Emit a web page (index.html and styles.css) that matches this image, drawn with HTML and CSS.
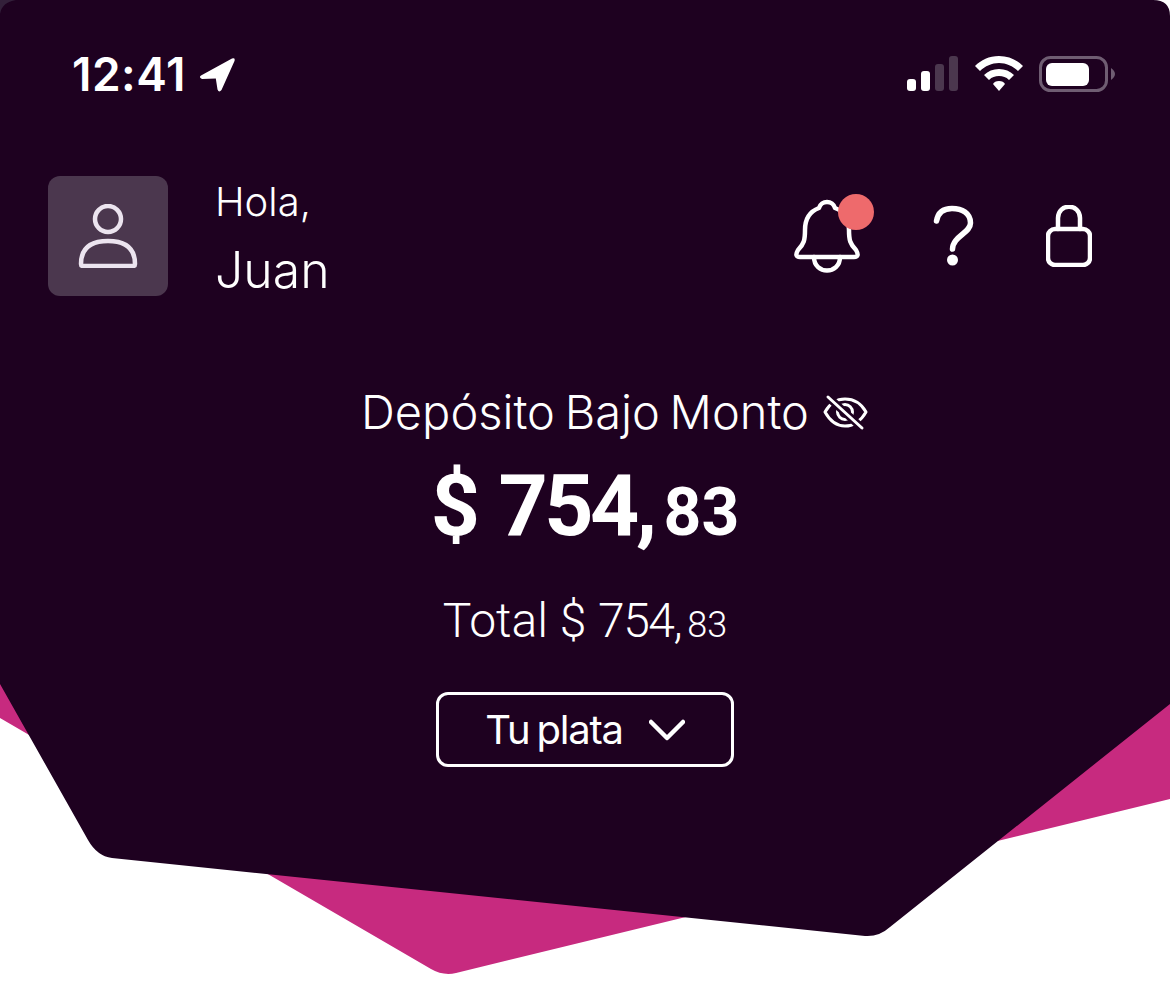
FILE: index.html
```html
<!DOCTYPE html>
<html lang="es">
<head>
    <meta charset="UTF-8">
    <meta name="viewport" content="width=device-width, initial-scale=1.0">
    <title>Tu plata</title>
    <link rel="stylesheet" href="styles.css">
</head>
<body>
    <div class="screen">
        <!-- fondo poligonal -->
        <svg class="backdrop" width="1170" height="982" viewBox="0 0 1170 982">
            <path class="shape-pink" d="M0 600V718L431 969Q443 976 456 973L1170 799V600Z"/>
            <path class="shape-dark" d="M0 0H1153Q1170 0 1170 16V704L890 927Q879 937 865 936L112 858Q97 856 88 840L0 684Z"/>
            <path class="shape-corner" d="M0 0H16Q2 2 0 14Z"/>
        </svg>

        <div class="content">
            <div class="status-bar">
                <div class="status-time">
                    <span>12:41</span>
                    <svg width="36" height="36" viewBox="0 0 36 36"><path class="fill-white" d="M2 19.5 33 2.500Q36.500 1.500 35.500 5L22.500 34Q20 37 18.500 33.500L16.800 22.500 3 23Q-.5 21.500 2 19.500Z"/></svg>
                </div>
                <div class="status-icons">
                    <svg width="52" height="36" viewBox="0 0 52 36">
                        <rect class="fill-white" x="0" y="23" width="9" height="12" rx="3"/>
                        <rect class="fill-white" x="14" y="15" width="9" height="20" rx="3"/>
                        <rect class="fill-dim" x="28" y="8" width="9" height="27" rx="3"/>
                        <rect class="fill-dim" x="42" y="0" width="9" height="35" rx="3"/>
                    </svg>
                    <svg width="50" height="36" viewBox="0 0 50 36">
                        <path class="fill-white" d="M25 0C15 0 7 4 1 10L6 15C11 10 18 7 25 7S39 10 44 15L49 10C43 4 35 0 25 0Z"/>
                        <path class="fill-white" d="M25 13C19 13 14 15 10 19L15 24C18 21 21 20 25 20S32 21 35 24L40 19C36 15 31 13 25 13Z"/>
                        <path class="fill-white" d="M25 25C22 25 20 26 19 28L25 35 31 28C30 26 28 25 25 25Z"/>
                    </svg>
                    <svg width="76" height="36" viewBox="0 0 76 36">
                        <rect class="battery-case" x="1.500" y="1.500" width="66" height="33" rx="10"/>
                        <rect class="fill-white" x="7" y="7" width="43" height="23" rx="6"/>
                        <path class="fill-dim-strong" d="M72 12Q76 15 76 18T72 24Z"/>
                    </svg>
                </div>
            </div>

            <header class="top-row">
                <div class="avatar">
                    <svg width="60" height="64" viewBox="0 0 60 64">
                        <circle class="line-soft" cx="30" cy="15" r="13"/>
                        <path class="line-soft" d="M3 60Q3 37 30 37T57 60Q57 62 55 62H5Q3 62 3 60Z"/>
                    </svg>
                </div>
                <div class="greeting">
                    <div class="greeting-hello">Hola,</div>
                    <div class="greeting-name">Juan</div>
                </div>
                <div class="actions">
                    <div class="bell">
                        <svg width="66" height="78" viewBox="0 0 66 78">
                            <path class="line" d="M4 52C10 46 11 42 11 32C11 20 17 13 25 10C27 2 39 2 41 10C49 13 55 20 55 32C55 42 56 46 62 52Q66 59 60 59H6Q0 59 4 52Z"/>
                            <path class="line" d="M20 59C20 77 46 77 46 59"/>
                        </svg>
                        <span class="badge"></span>
                    </div>
                    <svg width="42" height="62" viewBox="0 0 42 62">
                        <path class="line line-heavy" d="M4.500 16C6 7 12 3.500 20 3.500C30 3.500 38.500 8 38.500 18C38.500 28 21 31 20.500 44"/>
                        <circle class="fill-white" cx="20.500" cy="55" r="5.500"/>
                    </svg>
                    <svg width="46" height="62" viewBox="0 0 46 62">
                        <rect class="line" x="2" y="24" width="42" height="36" rx="7"/>
                        <path class="line" d="M12 24V13C12 -2 34 -2 34 13V24"/>
                    </svg>
                </div>
            </header>

            <section class="balance">
                <div class="balance-title">
                    <span>Depósito Bajo Monto</span>
                    <svg width="46" height="38" viewBox="0 0 46 38">
                        <path class="line-thin" d="M2 19C7 10 14 6 22 6S38 10 43 19C38 28 30 33 22 33S7 28 2 19Z"/>
                        <circle class="line-thin" cx="22" cy="19" r="7.500"/>
                        <path class="slash-gap" d="M5 4 39 35"/>
                        <path class="line-thin" d="M5 4 39 35"/>
                    </svg>
                </div>
                <div class="balance-amount">$ 754,<small>83</small></div>
                <div class="balance-total">Total $ <span class="digits">754,</span><small>83</small></div>
                <button class="money-btn">
                    <span>Tu plata</span>
                    <svg width="36" height="22" viewBox="0 0 36 22"><path class="line" d="M2 3 18 19 34 3"/></svg>
                </button>
            </section>
        </div>
    </div>
</body>
</html>
```

FILE: styles.css
```css
* {
    box-sizing: border-box;
}
body {
    margin: 0;
    background: white;
    font-family: "Inter", "Noto Sans", sans-serif;
    color: white;
}
.screen {
    position: relative;
    width: 1170px;
    height: 982px;
    overflow: hidden;
}
.backdrop {
    position: absolute;
    top: 0;
    left: 0;
}
.shape-pink {
    fill: #c72a7f;
}
.shape-dark {
    fill: #1e0120;
}
.shape-corner {
    fill: #33203a;
}
.content {
    position: relative;
    padding: 0 48px;
}

/* iconos */
.fill-white {
    fill: white;
}
.fill-dim {
    fill: #4b374e;
}
.fill-dim-strong {
    fill: #6f5d72;
}
.battery-case {
    fill: none;
    stroke: #6f5d72;
    stroke-width: 3;
}
.line {
    fill: none;
    stroke: white;
    stroke-width: 4.500;
    stroke-linecap: round;
    stroke-linejoin: round;
}
.line-heavy {
    stroke-width: 5.500;
}
.line-soft {
    fill: none;
    stroke: #ece4ef;
    stroke-width: 4.500;
    stroke-linejoin: round;
}
.line-thin {
    fill: none;
    stroke: white;
    stroke-width: 3;
    stroke-linecap: round;
    stroke-linejoin: round;
}
.slash-gap {
    fill: none;
    stroke: #1e0120;
    stroke-width: 8;
}

/* barra de estado */
.status-bar {
    display: flex;
    justify-content: space-between;
    align-items: center;
    height: 148px;
    padding: 0 7px 0 24px;
}
.status-time {
    display: flex;
    align-items: center;
    gap: 13px;
    font-size: 46px;
    font-weight: 600;
    letter-spacing: 0.5px;
}
.status-icons {
    display: flex;
    align-items: center;
    gap: 15px;
}

/* saludo y acciones */
.top-row {
    display: flex;
    align-items: center;
    height: 120px;
    margin-top: 28px;
}
.avatar {
    display: flex;
    align-items: center;
    justify-content: center;
    width: 120px;
    height: 120px;
    background: #4b374e;
    border-radius: 12px;
}
.greeting {
    margin: 4px 0 0 47px;
    font-weight: 300;
}
.greeting-hello {
    font-size: 40px;
    line-height: 44px;
}
.greeting-name {
    margin-top: 20px;
    font-size: 50px;
    line-height: 52px;
}
.actions {
    display: flex;
    align-items: center;
    gap: 72px;
    margin-left: auto;
    padding-right: 30px;
}
.bell {
    position: relative;
    display: flex;
    margin-top: 2px;
}
.badge {
    position: absolute;
    top: -4px;
    right: -14px;
    width: 36px;
    height: 36px;
    background: #ee6a6c;
    border-radius: 50%;
}

/* saldo */
.balance {
    display: flex;
    flex-direction: column;
    align-items: center;
    margin-top: 86px;
}
.balance-title {
    display: flex;
    align-items: center;
    gap: 14px;
    margin-left: 60px;
    font-size: 47px;
    font-weight: 300;
    line-height: 60px;
    word-spacing: -3.500px;
}
.balance-amount {
    margin-top: 14px;
    font-family: "Roboto", sans-serif;
    font-size: 86px;
    font-weight: 700;
    line-height: 100px;
    letter-spacing: -3.500px;
    word-spacing: 4px;
}
.balance-amount small {
    margin-left: 10px;
    font-size: 66px;
    letter-spacing: 0;
}
.balance-total {
    margin-top: 28px;
    font-family: "Roboto", sans-serif;
    font-size: 48px;
    font-weight: 300;
    line-height: 60px;
}
.balance-total .digits {
    letter-spacing: -1.500px;
}
.balance-total small {
    margin-left: 6px;
    font-size: 36px;
}
.money-btn {
    display: flex;
    align-items: center;
    justify-content: center;
    gap: 26px;
    width: 298px;
    height: 75px;
    margin-top: 37px;
    background: none;
    border: 3px solid white;
    border-radius: 12px;
    color: white;
    font-family: inherit;
    font-size: 40px;
    font-weight: 400;
    letter-spacing: -1.200px;
    word-spacing: -3px;
}
```
